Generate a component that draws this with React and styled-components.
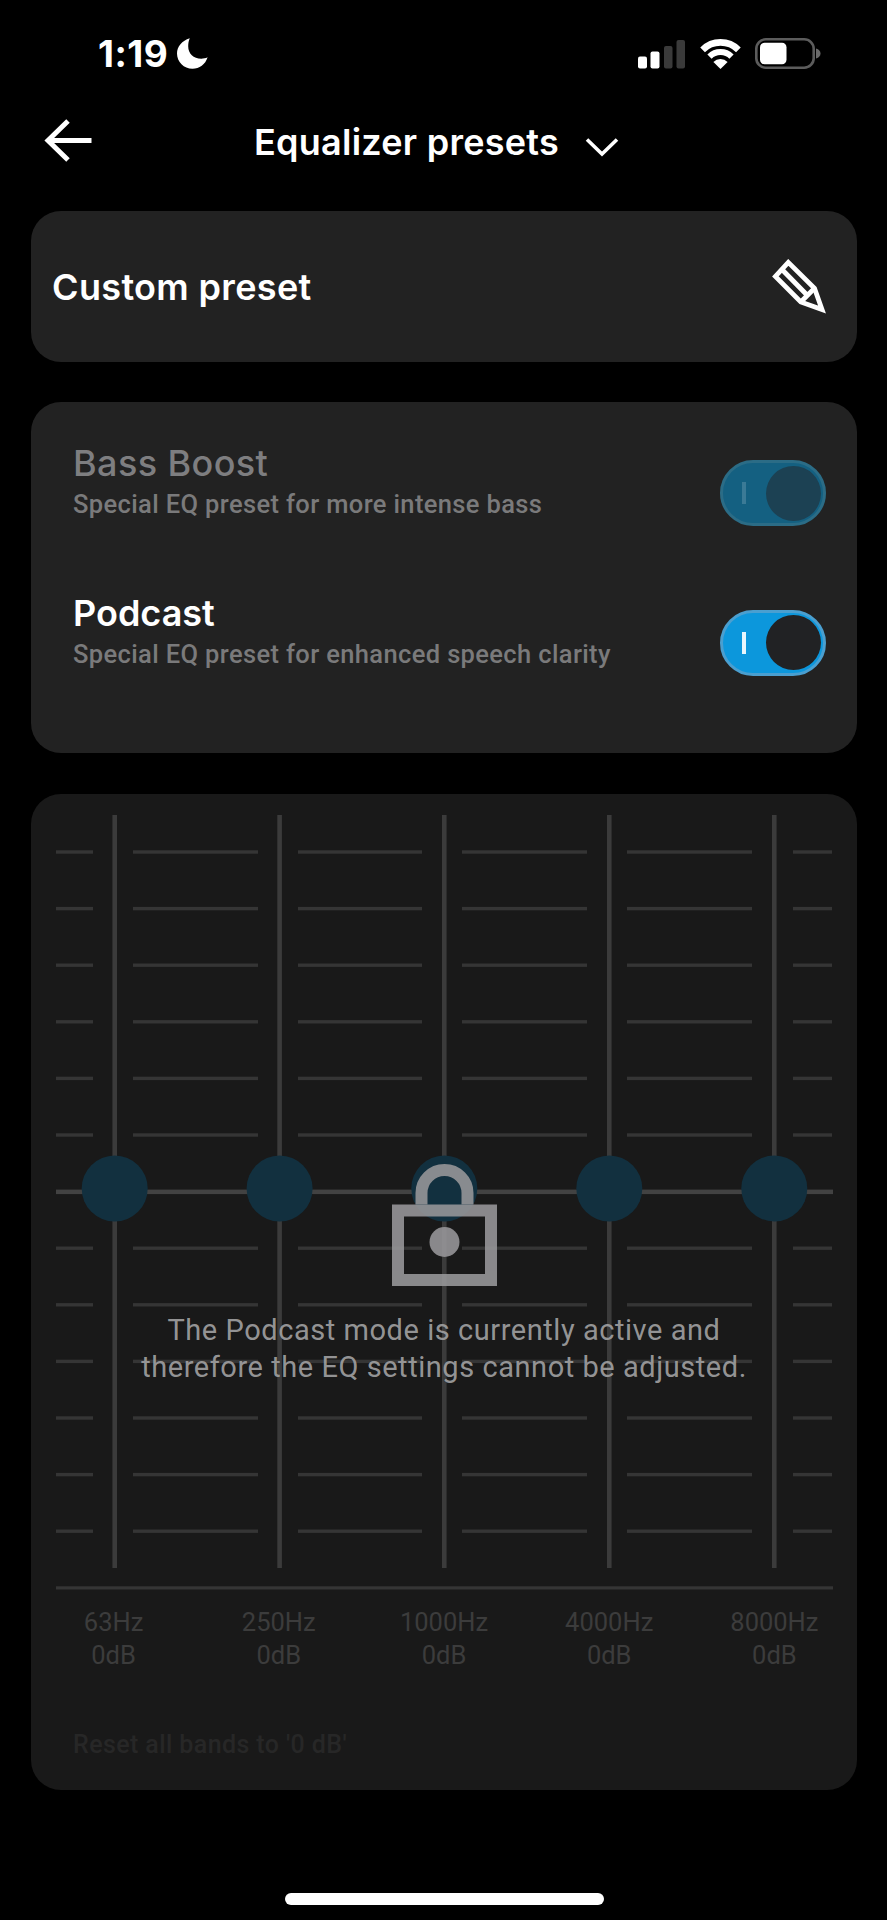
import React, { useState } from 'react';
import styled, { createGlobalStyle } from 'styled-components';

const bands = [
  { freq: '63Hz', gain: '0dB', x: 58.7 },
  { freq: '250Hz', gain: '0dB', x: 223.6 },
  { freq: '1000Hz', gain: '0dB', x: 388.3 },
  { freq: '4000Hz', gain: '0dB', x: 553.3 },
  { freq: '8000Hz', gain: '0dB', x: 718.3 },
];

// the short dashes between two sliders, [from, to]
const dashes = [[0, 37], [77, 202], [242, 366], [406, 531], [571, 696], [737, 776]];
const rows = Array.from({ length: 13 }, (_, i) => 37 + i * 56.6);

const Moon = () => (
  <svg width="31" height="31" viewBox="0 0 31 31" fill="#fff">
    <path d="M12.8 0.3C5 2.6 0 8.6 0 15.6C0 24.2 6.9 30.8 15.5 30.8C22.3 30.8 28.3 26.6 30.6 19.3C28.6 20.3 26.5 20.7 24.3 20.7C16.5 20.7 11.2 15.6 11.2 8.3C11.2 5.3 11.7 2.7 12.8 0.3Z" />
  </svg>
);

const Signal = () => (
  <svg width="49" height="30" viewBox="0 0 49 30">
    <rect x="1" y="17.5" width="9" height="12" rx="2" fill="#fff" />
    <rect x="13.5" y="12.5" width="9" height="17" rx="2" fill="#fff" />
    <rect x="27" y="7" width="8.5" height="22.5" rx="2" fill="#3a3a3a" />
    <rect x="39.5" y="1" width="8.5" height="28.5" rx="2" fill="#3a3a3a" />
  </svg>
);

const Wifi = () => (
  <svg width="41" height="30" viewBox="0 0 41 30" fill="none" stroke="#fff">
    <path d="M2.6 10.8A25.3 25.3 0 0 1 38.4 10.8" strokeWidth="6.6" />
    <path d="M9.5 17.6A15.6 15.6 0 0 1 31.5 17.6" strokeWidth="6" />
    <path d="M20.5 30L13.4 23A10 10 0 0 1 27.6 23Z" fill="#fff" stroke="none" />
  </svg>
);

const Battery = () => (
  <svg width="66" height="31" viewBox="0 0 66 31">
    <rect x="1.3" y="1.3" width="57.4" height="28.4" rx="9.5" fill="none" stroke="#5c5c5c" strokeWidth="2.6" />
    <rect x="5" y="4.8" width="26.5" height="21.4" rx="4.5" fill="#fff" />
    <path d="M61 10.5C64 11.3 65.5 13.2 65.5 15.5C65.5 17.8 64 19.7 61 20.5Z" fill="#6a6a6a" />
  </svg>
);

const BackArrow = () => (
  <svg width="48" height="44" viewBox="0 0 48 44" fill="none" stroke="#fff" strokeWidth="5">
    <path d="M24 2L4 21.5L24 41M4 21.5H47.5" />
  </svg>
);

const Chevron = () => (
  <svg width="34" height="20" viewBox="0 0 34 20" fill="none" stroke="#fff" strokeWidth="3.6">
    <path d="M2 1.5L17 16L32 1.5" />
  </svg>
);

const Pencil = () => (
  <svg width="55" height="56" viewBox="0 0 55 56" fill="none" stroke="#fff" strokeWidth="4.8">
    <path d="M16.3 3.4L42.5 29.3L50 50.5L28.8 43L3.4 17.5Z" />
    <path d="M10 10.5L35.5 36.5M28.8 43L42.5 29.3" />
  </svg>
);

const Lock = () => (
  <svg width="105" height="122" viewBox="0 0 105 122">
    <g opacity="0.88" fill="none" stroke="#99989b" strokeWidth="12">
      <rect x="6" y="46.5" width="93" height="69.5" />
      <path d="M29.5 40.5V29A23 23 0 0 1 75.5 29V40.5" />
      <circle cx="52.5" cy="78" r="15" fill="#99989b" stroke="none" />
    </g>
  </svg>
);

const EqChart = () => (
  <Chart viewBox="0 0 777 776">
    {rows.map((y, i) => i === 6
      ? <rect key={y} x="0" y={y - 2} width="777" height="4.5" fill="#424242" />
      : dashes.map(([a, b]) => <rect key={y + '-' + a} x={a} y={y - 1.7} width={b - a} height="3.4" fill="#353535" />)
    )}
    {bands.map((b) => (
      <g key={b.freq}>
        <rect x={b.x - 2.3} y="0" width="4.6" height="753" fill="#3b3b3b" />
        <circle cx={b.x} cy="373.5" r="33" fill="#12303f" />
      </g>
    ))}
    <rect x="0" y="771.3" width="777" height="3.2" fill="#353535" />
  </Chart>
);

const PresetRow = ({ title, text, locked, on, onToggle }) => (
  <Row>
    <div>
      <RowTitle $locked={locked}>{title}</RowTitle>
      <RowText>{text}</RowText>
    </div>
    <Toggle $locked={locked} $on={on} disabled={locked} onClick={onToggle} aria-label={title}>
      <Tick $locked={locked} />
      <Knob $locked={locked} />
    </Toggle>
  </Row>
);

const App = () => {
  const [podcast, setPodcast] = useState(true);

  return (
    <Screen>
      <Global />
      <StatusBar>
        <Time>1:19</Time>
        <Moon />
        <StatusIcons>
          <Signal />
          <Wifi />
          <Battery />
        </StatusIcons>
      </StatusBar>
      <Header>
        <BackArrow />
        <Title>Equalizer presets</Title>
        <ChevronBox><Chevron /></ChevronBox>
      </Header>

      <Content>
        <CustomCard>
          <CardTitle>Custom preset</CardTitle>
          <Pencil />
        </CustomCard>

        <PresetCard>
          <PresetRow title="Bass Boost" text="Special EQ preset for more intense bass" locked on />
          <PresetRow
            title="Podcast"
            text="Special EQ preset for enhanced speech clarity"
            on={podcast}
            onToggle={() => setPodcast(!podcast)}
          />
        </PresetCard>

        <EqCard>
          <EqChart />
          <Labels>
            {bands.map((b) => (
              <Label key={b.freq}>
                <span>{b.freq}</span>
                <span>{b.gain}</span>
              </Label>
            ))}
          </Labels>
          <Reset>Reset all bands to '0 dB'</Reset>
          {podcast && (
            <LockOverlay>
              <Lock />
              <Message>
                The Podcast mode is currently active and<br />
                therefore the EQ settings cannot be adjusted.
              </Message>
            </LockOverlay>
          )}
        </EqCard>
      </Content>
      <HomeBar />
    </Screen>
  );
};

export default App;

const Global = createGlobalStyle`
  body {
    margin: 0;
    background: #000;
  }
  * {
    box-sizing: border-box;
  }
  svg {
    display: block;
    flex-shrink: 0;
  }
`;

const Screen = styled.div`
  width: 887px;
  height: 1920px;
  display: flex;
  flex-direction: column;
  background: #000;
  color: #fff;
  font-family: Inter, 'Liberation Sans', sans-serif;
  overflow: hidden;
`;

const StatusBar = styled.div`
  height: 107px;
  display: flex;
  align-items: center;
  padding: 0 66px 0 98px;
`;

const Time = styled.div`
  width: 79px;
  font-size: 37px;
  font-weight: 700;
  letter-spacing: 0.5px;
`;

const StatusIcons = styled.div`
  display: flex;
  align-items: center;
  margin-left: auto;
  gap: 14px;
`;

const Header = styled.div`
  height: 67px;
  display: flex;
  align-items: center;
  padding-left: 44px;
`;

const Title = styled.div`
  margin-left: 162px;
  padding-top: 2px;
  font-size: 36px;
  font-weight: 600;
  letter-spacing: 0.25px;
`;

const ChevronBox = styled.div`
  padding: 14px 0 0 26px;
`;

const Content = styled.div`
  padding: 37px 30px 0 31px;
  display: flex;
  flex-direction: column;
`;

const Card = styled.div`
  border-radius: 30px;
  background: #222;
`;

const CustomCard = styled(Card)`
  height: 151px;
  display: flex;
  align-items: center;
  justify-content: space-between;
  padding: 0 30px 0 21px;
`;

const CardTitle = styled.div`
  font-size: 36px;
  font-weight: 600;
  letter-spacing: 0.35px;
`;

const PresetCard = styled(Card)`
  height: 351px;
  margin-top: 40px;
  padding: 39px 31px 0 42px;
`;

const Row = styled.div`
  height: 149.5px;
  display: flex;
  justify-content: space-between;
`;

const RowTitle = styled.div`
  font-size: 36px;
  line-height: 44px;
  font-weight: ${(p) => (p.$locked ? 500 : 600)};
  letter-spacing: ${(p) => (p.$locked ? '0.4px' : '0')};
  color: ${(p) => (p.$locked ? '#7e7e80' : '#fff')};
`;

const RowText = styled.div`
  font-family: Roboto, sans-serif;
  font-size: 25.5px;
  line-height: 39px;
  font-weight: 500;
  letter-spacing: 0.36px;
  color: #7a7a7b;
`;

const Toggle = styled.button`
  width: 106px;
  height: 66px;
  margin-top: 19px;
  padding: 0 2px 0 19px;
  display: flex;
  flex-direction: ${(p) => (p.$on ? 'row' : 'row-reverse')};
  align-items: center;
  justify-content: space-between;
  border: 3px solid ${(p) => (p.$locked ? '#2b6c86' : '#4a9fd0')};
  border-radius: 34px;
  background: ${(p) => (p.$locked ? '#146081' : '#0c97dc')};
`;

const Tick = styled.span`
  width: 4px;
  height: 22px;
  background: ${(p) => (p.$locked ? '#3b7a96' : '#e8f6fd')};
`;

const Knob = styled.span`
  width: 55px;
  height: 55px;
  border-radius: 50%;
  background: ${(p) => (p.$locked ? '#1c4153' : '#212224')};
`;

const EqCard = styled(Card)`
  position: relative;
  height: 996px;
  margin-top: 41px;
  padding-top: 21px;
  background: #191919;
`;

const Chart = styled.svg`
  width: 777px;
  height: 776px;
  margin: 0 auto;
`;

const Labels = styled.div`
  display: grid;
  grid-template-columns: repeat(5, 1fr);
  margin-top: 15px;
`;

const Label = styled.div`
  display: flex;
  flex-direction: column;
  align-items: center;
  font-family: Roboto, sans-serif;
  font-size: 25.5px;
  line-height: 33px;
  color: #3c3c3c;
`;

const Reset = styled.div`
  margin: 56px 0 0 42px;
  font-family: Roboto, sans-serif;
  font-size: 25px;
  font-weight: 500;
  line-height: 34px;
  letter-spacing: 0.4px;
  color: #272727;
`;

const LockOverlay = styled.div`
  position: absolute;
  inset: 0;
  display: flex;
  flex-direction: column;
  align-items: center;
  padding-top: 370px;
`;

const Message = styled.div`
  margin-top: 25.5px;
  text-align: center;
  font-family: Roboto, sans-serif;
  font-size: 29px;
  line-height: 37.5px;
  letter-spacing: 0.55px;
  color: rgba(160, 160, 161, 0.93);
`;

const HomeBar = styled.div`
  width: 319px;
  height: 12px;
  margin: auto 283px 15px 285px;
  border-radius: 6px;
  background: #fff;
`;
